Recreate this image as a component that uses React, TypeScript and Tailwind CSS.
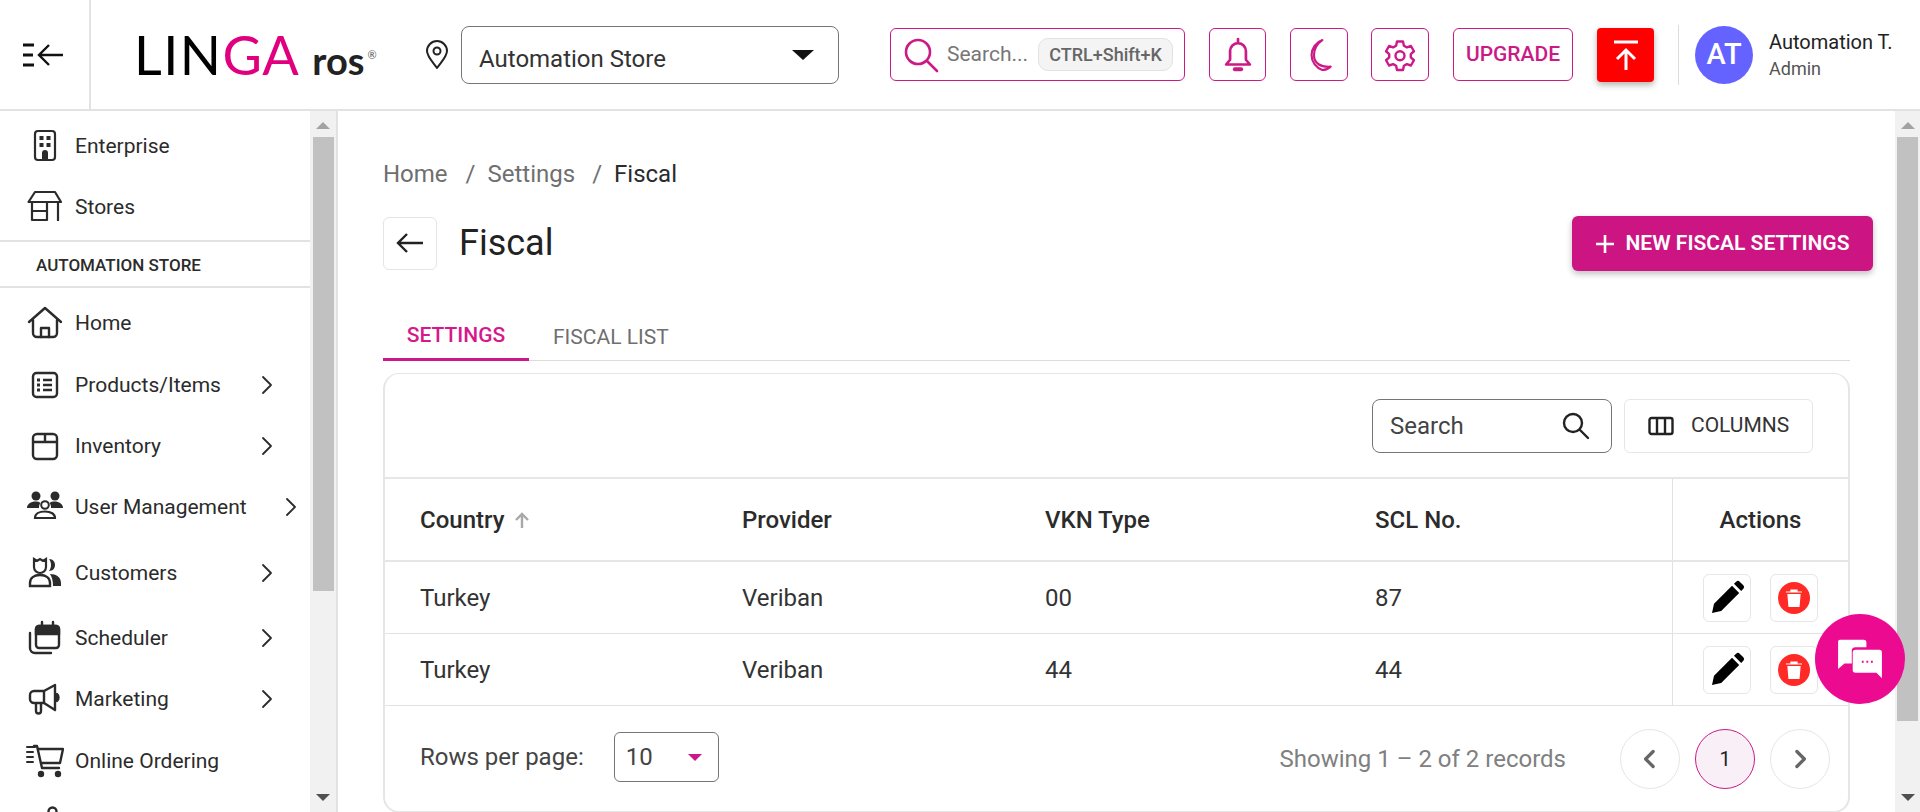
import type { ReactNode } from "react";

const PINK = "#cb1a87";

function Stroke({ size = 24, width = 2, color = "currentColor", children, className }: { size?: number; width?: number; color?: string; children: ReactNode; className?: string }) {
  return (
    <svg width={size} height={size} viewBox="0 0 24 24" fill="none" stroke={color} strokeWidth={width} strokeLinecap="round" strokeLinejoin="round" className={className}>
      {children}
    </svg>
  );
}

const navIcons: Record<string, ReactNode> = {
  enterprise: (
    <svg width="36" height="36" viewBox="0 0 36 36" fill="none" stroke="#2b2b2b" strokeWidth="2.2">
      <rect x="8" y="3" width="20" height="29" rx="3" />
      <path d="M12.5 8h4v4h-4zM19.5 8h4v4h-4zM12.5 15h4v4h-4zM19.5 15h4v4h-4zM15 31v-6a3 3 0 0 1 6 0v6z" fill="#2b2b2b" stroke="none" />
    </svg>
  ),
  stores: (
    <svg width="36" height="36" viewBox="0 0 36 36" fill="none" stroke="#2b2b2b" strokeWidth="2.2" strokeLinejoin="round">
      <path d="M8 3h20l6 10H1.500z" />
      <path d="M5 13v18h15V13M5 22h15M31 13v19" />
    </svg>
  ),
  home: (
    <svg width="36" height="36" viewBox="0 0 36 36" fill="none" stroke="#2b2b2b" strokeWidth="2.4" strokeLinejoin="round" strokeLinecap="round">
      <path d="M2 17 18 3l16 14" />
      <path d="M6 15v13a4 4 0 0 0 4 4h16a4 4 0 0 0 4-4V15" />
      <path d="M14 32v-9h8v9" />
    </svg>
  ),
  products: (
    <svg width="36" height="36" viewBox="0 0 36 36" fill="none" stroke="#2b2b2b" strokeWidth="2.4">
      <rect x="6" y="6" width="24" height="24" rx="3.500" />
      <path d="M16 13h9M16 18h9M16 23h9" />
      <path d="M10 11.500h3v3h-3zM10 16.500h3v3h-3zM10 21.500h3v3h-3z" fill="#2b2b2b" stroke="none" />
    </svg>
  ),
  inventory: (
    <svg width="36" height="36" viewBox="0 0 36 36" fill="none" stroke="#2b2b2b" strokeWidth="2.4" strokeLinejoin="round">
      <path d="M10 6h16a4 4 0 0 1 4 4v17a4 4 0 0 1-4 4H10a4 4 0 0 1-4-4V10a4 4 0 0 1 4-4z" />
      <path d="M6 14h24M18 6v8" />
    </svg>
  ),
  users: (
    <svg width="38" height="36" viewBox="0 0 38 36" fill="#2b2b2b">
      <circle cx="10" cy="7" r="4.500" />
      <circle cx="29" cy="7" r="4.500" />
      <path d="M1 19c0-4 4-6.500 8.500-6.500 2 0 3.500.4 5 1.500-1 1-1.500 2.500-1.500 5zM37 19c0-4-4-6.500-8.500-6.500-2 0-3.500.4-5 1.500 1 1 1.500 2.500 1.500 5z" />
      <circle cx="19" cy="16" r="3.800" fill="none" stroke="#2b2b2b" strokeWidth="2" />
      <path d="M9 29c0-4 4-6.500 10-6.500s10 2.500 10 6.500z" fill="none" stroke="#2b2b2b" strokeWidth="2.200" />
    </svg>
  ),
  customers: (
    <svg width="36" height="36" viewBox="0 0 36 36" fill="#2b2b2b">
      <path d="M7 4l3 2 3-2 3 2 3-2v8a6 6 0 0 1-12 0z" fill="none" stroke="#2b2b2b" strokeWidth="2.200" />
      <path d="M22 4c4 0 6 3 6 6s-2 6-6 6c1.500-2 2-4 2-6s-.5-4-2-6z" />
      <path d="M3 31v-3c0-5 4-8 10-8s10 3 10 8v3z" fill="none" stroke="#2b2b2b" strokeWidth="2.400" />
      <path d="M23 19c6 0 11 3 11 9v3h-8c0-5-1-9-3-12z" />
    </svg>
  ),
  scheduler: (
    <svg width="36" height="36" viewBox="0 0 36 36" fill="none" stroke="#2b2b2b" strokeWidth="2.400" strokeLinecap="round">
      <rect x="9" y="6" width="23" height="22" rx="3" />
      <path d="M9 9a3 3 0 0 1 3-3h17a3 3 0 0 1 3 3v5H9z" fill="#2b2b2b" />
      <path d="M15 2v4M26 2v4" />
      <path d="M3 13v15a5 5 0 0 0 5 5h16" />
    </svg>
  ),
  marketing: (
    <svg width="36" height="36" viewBox="0 0 36 36" fill="none" stroke="#2b2b2b" strokeWidth="2.400" strokeLinejoin="round">
      <path d="M28 4 17 10H7a4 4 0 0 0-4 4v4a4 4 0 0 0 4 4h10l11 7z" />
      <path d="M9 22v8a2.500 2.500 0 0 0 5 0v-8M17 10v12" />
      <path d="M30 13c2 1 2 6 0 7z" fill="#2b2b2b" />
    </svg>
  ),
  online: (
    <svg width="38" height="36" viewBox="0 0 38 36" fill="none" stroke="#2b2b2b" strokeWidth="2.400" strokeLinecap="round" strokeLinejoin="round">
      <path d="M1 4h8M1 9h6M1 14h6M1 19h6" strokeWidth="2" />
      <path d="M8 3h3l5 22h17" />
      <path d="M12 6h25l-3 14H15" />
      <circle cx="15" cy="31" r="2" fill="#2b2b2b" />
      <circle cx="32" cy="31" r="2" fill="#2b2b2b" />
    </svg>
  ),
};

function Chevron() {
  return (
    <Stroke size={24} width={1.800} color="#2b2b2b">
      <path d="m8 4 8 8-8 8" />
    </Stroke>
  );
}

function NavItem({ icon, label, arrow, mt, wide }: { icon: string; label: string; arrow?: boolean; mt: string; wide?: boolean }) {
  return (
    <div className={`flex h-[60px] items-center pl-[26px] ${mt}`}>
      <div className="flex w-[38px] shrink-0 justify-center">{navIcons[icon]}</div>
      <span className="ml-[11px] text-[21px] leading-none text-[#2b2b2b]">{label}</span>
      {arrow && (
        <div className={`ml-auto ${wide ? "mr-[7px]" : "mr-[31px]"} flex`}>
          <Chevron />
        </div>
      )}
    </div>
  );
}

function Scrollbar({ thumb, right }: { thumb: string; right?: boolean }) {
  return (
    <div className={`relative flex shrink-0 flex-col items-center bg-[#f1f1f1] ${right ? "w-[25px]" : "w-[26px]"}`}>
      <div className="mt-[11px] h-0 w-0 border-x-[7px] border-b-[7px] border-x-transparent border-b-[#a3a3a3]" />
      <div className={`mt-[8px] w-[21px] bg-[#c1c1c1] ${thumb}`} />
      <div className="mt-auto mb-[11px] h-0 w-0 border-x-[7px] border-t-[7px] border-x-transparent border-t-[#505050]" />
    </div>
  );
}

function IconBtn({ className, children }: { className: string; children: ReactNode }) {
  return <div className={`flex items-center justify-center rounded-[6px] border border-[#cb1a87] ${className}`}>{children}</div>;
}

function Header() {
  return (
    <header className="flex h-[111px] shrink-0 items-center border-b-2 border-[#e2e2e2] bg-white">
      <div className="flex h-full w-[91px] shrink-0 items-center border-r-2 border-[#e2e2e2] pl-[22px]">
        <svg width="42" height="30" viewBox="0 0 42 30" fill="none" stroke="#111" strokeWidth="2.400">
          <path d="M1 5h11M1 15h10M1 25h11" strokeWidth="3" />
          <path d="M41 15H17M27 5 17 15l10 10" />
        </svg>
      </div>
      <div className="ml-[43px] flex w-[293px] shrink-0 items-baseline font-['Lato',sans-serif] leading-none">
        <span className="text-[54px] font-normal tracking-[1.5px] text-black">LIN</span>
        <span className="text-[54px] font-normal tracking-[0.5px] text-[#e0007f]">GA</span>
        <span className="ml-[13px] text-[38px] font-bold text-[#222]">ros</span>
        <span className="ml-[3px] self-center text-[11px] text-[#555]">®</span>
      </div>
      <svg width="24" height="30" viewBox="0 0 24 30" fill="none" stroke="#222" strokeWidth="2" className="ml-[-2px] shrink-0">
        <path d="M12 28C6 20 2 16 2 11a10 10 0 0 1 20 0c0 5-4 9-10 17z" strokeLinejoin="round" />
        <circle cx="12" cy="11" r="3.500" />
      </svg>
      <div className="ml-[12px] flex h-[58px] w-[378px] shrink-0 items-center rounded-[8px] border border-[#757575] pl-[17px] pr-[24px]">
        <span className="pt-[9px] text-[24px] leading-[28px] text-[#333]">Automation Store</span>
        <div className="ml-auto h-0 w-0 border-x-[11px] border-t-[10px] border-x-transparent border-t-[#111]" />
      </div>
      <div className="ml-[51px] flex h-[53px] w-[295px] shrink-0 items-center rounded-[6px] border border-[#cb1a87] pl-[12px]">
        <svg width="36" height="36" viewBox="0 0 36 36" fill="none" stroke={PINK} strokeWidth="2.600" strokeLinecap="round">
          <circle cx="15" cy="15" r="12" />
          <path d="m24 24 10 10" />
        </svg>
        <span className="ml-[8px] text-[21px] text-[#777]">Search...</span>
        <span className="ml-[10px] flex h-[33px] w-[135px] items-center justify-center rounded-[10px] border border-[#e2e2e2] bg-[#f4f4f4] text-[18px] font-medium text-[#666]">CTRL+Shift+K</span>
      </div>
      <IconBtn className="ml-[24px] h-[53px] w-[57px] shrink-0">
        <Stroke size={38} width={1.700} color={PINK}>
          <path d="M12 2v2M7 15V9.500a5 5 0 0 1 10 0V15l2.500 3h-15z" />
          <path d="M10 21h4" strokeWidth={2.500} />
        </Stroke>
      </IconBtn>
      <IconBtn className="ml-[24px] h-[53px] w-[58px] shrink-0">
        <Stroke size={40} width={1.300} color={PINK}>
          <path d="M14 3a9.500 9.500 0 0 0 0 18c2 0 3.500-.6 5-2-6 .5-10-2-10-7 0-4 2-7 5-9z" />
        </Stroke>
      </IconBtn>
      <IconBtn className="ml-[23px] h-[53px] w-[58px] shrink-0">
        <Stroke size={36} width={1.600} color={PINK}>
          <path d="M10 3h4l.6 2.800 2 1.100 2.700-.9 2 3.500-2.100 1.900v2.200l2.100 1.900-2 3.500-2.700-.9-2 1.100L14 22h-4l-.6-2.800-2-1.100-2.700.9-2-3.500 2.100-1.900v-2.200L2.700 9.500l2-3.500 2.700.9 2-1.100z" />
          <circle cx="12" cy="12.500" r="3" />
        </Stroke>
      </IconBtn>
      <IconBtn className="ml-[24px] h-[53px] w-[120px] shrink-0">
        <span className="text-[21px] font-medium text-[#cb1a87]">UPGRADE</span>
      </IconBtn>
      <div className="ml-[24px] flex h-[54px] w-[57px] shrink-0 items-center justify-center rounded-[4px] bg-[#ff0000] shadow-[0_3px_6px_rgba(0,0,0,0.3)]">
        <svg width="26" height="30" viewBox="0 0 26 30" fill="none" stroke="#fff" strokeWidth="3">
          <path d="M1 2h24M13 30V11M4 19l9-9 9 9" />
        </svg>
      </div>
      <div className="ml-[24px] h-[60px] w-px shrink-0 bg-[#dcdcdc]" />
      <div className="ml-[16px] flex h-[58px] w-[58px] shrink-0 items-center justify-center rounded-full bg-[#6563ff] text-[29px] font-medium text-white">AT</div>
      <div className="ml-[16px] flex flex-col pt-[2px]">
        <span className="text-[20px] leading-[24px] text-[#222]">Automation T.</span>
        <span className="mt-[3px] text-[18px] leading-[24px] text-[#555]">Admin</span>
      </div>
    </header>
  );
}

function Sidebar() {
  return (
    <aside className="flex w-[338px] shrink-0 border-r-2 border-[#e2e2e2] bg-white">
      <nav className="min-w-0 flex-1 overflow-hidden">
        <NavItem icon="enterprise" label="Enterprise" mt="mt-[5px]" />
        <NavItem icon="stores" label="Stores" mt="mt-[1px]" />
        <div className="mt-[3px] flex h-[48px] items-center border-y-2 border-[#e2e2e2] pl-[36px] pt-[3px] text-[17px] font-medium text-[#2b2b2b]">AUTOMATION STORE</div>
        <NavItem icon="home" label="Home" mt="mt-[5px]" />
        <NavItem icon="products" label="Products/Items" arrow mt="mt-[2px]" />
        <NavItem icon="inventory" label="Inventory" arrow mt="mt-[1px]" />
        <NavItem icon="users" label="User Management" arrow wide mt="mt-[1px]" />
        <NavItem icon="customers" label="Customers" arrow mt="mt-[6px]" />
        <NavItem icon="scheduler" label="Scheduler" arrow mt="mt-[5px]" />
        <NavItem icon="marketing" label="Marketing" arrow mt="mt-[1px]" />
        <NavItem icon="online" label="Online Ordering" mt="mt-[2px]" />
        {/* next item, only the top of its icon is in view */}
        <div className="mt-[15px] flex pl-[47px]">
          <svg width="11" height="11" viewBox="0 0 11 11" fill="none" stroke="#2b2b2b" strokeWidth="2.400">
            <circle cx="5.500" cy="5.500" r="4" />
          </svg>
        </div>
      </nav>
      <Scrollbar thumb="h-[454px]" />
    </aside>
  );
}

function ActionCell() {
  return (
    <div className="flex h-full w-[176px] shrink-0 items-center gap-[19px] border-l border-[#e2e2e2] pl-[30px]">
      <div className="flex h-[48px] w-[48px] items-center justify-center rounded-[6px] border border-[#e6e6e6]">
        <svg width="40" height="40" viewBox="0 0 24 24" fill="#000">
          <path d="M3 21l1.200-5.500L15 4.700l4.300 4.300L8.500 19.800zM16.200 3.500l1.300-1.300a1.500 1.500 0 0 1 2.100 0l2.200 2.200a1.500 1.500 0 0 1 0 2.100l-1.300 1.300z" />
        </svg>
      </div>
      <div className="flex h-[48px] w-[48px] items-center justify-center rounded-[6px] border border-[#e6e6e6]">
        <svg width="32" height="32" viewBox="0 0 32 32">
          <circle cx="16" cy="16" r="16" fill="#ff2a26" />
          <path d="M8 10h16M13 10V8h6v2M10 12.500h12l-1 12h-10z" fill="#fff" stroke="#fff" strokeWidth="1.200" />
        </svg>
      </div>
    </div>
  );
}

function Row({ a, b, c, d, h }: { a: string; b: string; c: string; d: string; h: string }) {
  return (
    <div className={`flex items-center border-b border-[#e2e2e2] text-[24px] text-[#333] ${h}`}>
      <span className="w-[357px] pl-[35px]">{a}</span>
      <span className="w-[303px]">{b}</span>
      <span className="w-[330px]">{c}</span>
      <span className="flex-1">{d}</span>
      <ActionCell />
    </div>
  );
}

function Card() {
  return (
    <div className="mt-[12px] w-[1467px] rounded-[16px] border-2 border-t border-[#e6e6e6]">
      <div className="flex h-[105px] items-center justify-end border-b-2 border-[#e6e6e6] pr-[35px]">
        <div className="flex h-[54px] w-[240px] items-center justify-between rounded-[8px] border border-[#757575] pl-[17px] pr-[21px] text-[24px] text-[#444]">
          Search
          <svg width="28" height="28" viewBox="0 0 28 28" fill="none" stroke="#222" strokeWidth="2.400" strokeLinecap="round">
            <circle cx="11" cy="11" r="9" />
            <path d="m18 18 8 8" />
          </svg>
        </div>
        <div className="ml-[12px] flex h-[54px] w-[189px] items-center rounded-[6px] border border-[#e6e6e6] pl-[23px] text-[21px] font-normal text-[#333]">
          <svg width="26" height="20" viewBox="0 0 26 20" fill="none" stroke="#222" strokeWidth="2.400" strokeLinejoin="round">
            <rect x="1.500" y="2" width="23" height="16" rx="2" />
            <path d="M9 2v16M17 2v16" />
          </svg>
          <span className="ml-[17px]">COLUMNS</span>
        </div>
      </div>
      <div className="flex h-[83px] items-center border-b-2 border-[#e6e6e6] text-[24px] font-medium text-[#2b2b2b]">
        <span className="flex w-[357px] items-center pl-[35px]">
          Country
          <svg width="18" height="18" viewBox="0 0 18 18" fill="none" stroke="#a8a8a8" strokeWidth="2.400" className="ml-[9px]">
            <path d="M9 17V3M3 9l6-6 6 6" />
          </svg>
        </span>
        <span className="w-[303px]">Provider</span>
        <span className="w-[330px]">VKN Type</span>
        <span className="flex-1">SCL No.</span>
        <div className="flex h-full w-[176px] shrink-0 items-center justify-center border-l border-[#e2e2e2]">Actions</div>
      </div>
      <Row a="Turkey" b="Veriban" c="00" d="87" h="h-[72px]" />
      <Row a="Turkey" b="Veriban" c="44" d="44" h="h-[72px]" />
      <div className="flex h-[105px] items-center pl-[35px] pr-[18px]">
        <div className="mb-[3px] flex items-center">
          <span className="text-[24px] text-[#444]">Rows per page:</span>
          <div className="ml-[30px] flex h-[50px] w-[105px] items-center justify-between rounded-[6px] border border-[#757575] pl-[11px] pr-[16px] text-[24px] text-[#444]">
            10
            <div className="h-0 w-0 border-x-[7px] border-t-[7px] border-x-transparent border-t-[#cb1a87]" />
          </div>
        </div>
        <span className="ml-auto text-[24px] text-[#808080]">Showing 1 – 2 of 2 records</span>
        <div className="ml-[54px] flex h-[60px] w-[60px] items-center justify-center rounded-full border border-[#e6e6e6]">
          <Stroke size={30} width={2.600} color="#666"><path d="m14.500 6-6 6 6 6" /></Stroke>
        </div>
        <div className="ml-[15px] flex h-[60px] w-[60px] items-center justify-center rounded-full border border-[#cb1a87] bg-[#f9f0f7] text-[20px] text-[#222]">1</div>
        <div className="ml-[15px] flex h-[60px] w-[60px] items-center justify-center rounded-full border border-[#e6e6e6]">
          <Stroke size={30} width={2.600} color="#666"><path d="m9.500 6 6 6-6 6" /></Stroke>
        </div>
      </div>
    </div>
  );
}

function Main() {
  return (
    <main className="flex min-w-0 flex-1 bg-white">
      <div className="min-w-0 flex-1 overflow-hidden pl-[45px] pt-[45px]">
        <div className="flex items-center text-[24px] leading-[36px] text-[#6f6f6f]">
          <span>Home</span>
          <span className="ml-[18px]">/</span>
          <span className="ml-[12px]">Settings</span>
          <span className="ml-[17px]">/</span>
          <span className="ml-[12px] text-[#2b2b2b]">Fiscal</span>
        </div>
        <div className="mt-[23px] flex items-center">
          <div className="flex h-[53px] w-[54px] items-center justify-center rounded-[6px] border border-[#e4e4e4]">
            <svg width="28" height="20" viewBox="0 0 28 20" fill="none" stroke="#222" strokeWidth="2.400">
              <path d="M27 10H2M11 1 2 10l9 9" />
            </svg>
          </div>
          <h1 className="ml-[22px] text-[36px] font-normal leading-none text-[#222]">Fiscal</h1>
          <div className="ml-auto mr-[22px] mt-[1px] flex h-[55px] w-[301px] items-center justify-center gap-[12px] rounded-[6px] bg-[#cd1483] text-[21px] font-semibold text-white shadow-[0_3px_6px_rgba(0,0,0,0.25)]">
            <svg width="18" height="18" viewBox="0 0 18 18" fill="none" stroke="#fff" strokeWidth="2.600"><path d="M9 0v18M0 9h18" /></svg>
            NEW FISCAL SETTINGS
          </div>
        </div>
        <div className="mt-[49px] flex h-[41px] w-[1467px] border-b border-[#dcdcdc] text-[21px]">
          <div className="flex h-[41px] w-[146px] items-center justify-center border-b-[3px] border-[#cb1a87] pb-[6px] font-medium text-[#d6188c]">SETTINGS</div>
          <div className="ml-[24px] flex h-[41px] items-center pb-[5px] font-normal text-[#6f6f6f]">FISCAL LIST</div>
        </div>
        <Card />
      </div>
      <Scrollbar thumb="h-[584px]" right />
    </main>
  );
}

export default function App() {
  return (
    <div className="relative flex h-[812px] w-[1920px] flex-col overflow-hidden bg-white font-['Roboto',sans-serif]">
      <Header />
      <div className="flex min-h-0 flex-1">
        <Sidebar />
        <Main />
      </div>
      {/* chat launcher floats above the page */}
      <div className="absolute left-[1815px] top-[614px] flex h-[90px] w-[90px] items-center justify-center rounded-full bg-[#ec0a91]">
        <svg width="46" height="42" viewBox="0 0 50 46">
          <path d="M3 2h26a3 3 0 0 1 3 3v5H20a4 4 0 0 0-4 4v14H8l-7 6V4a2 2 0 0 1 2-2z" fill="#fff" />
          <path d="M20 13h26a3 3 0 0 1 3 3v28l-6-6H20a3 3 0 0 1-3-3V16a3 3 0 0 1 3-3z" fill="#fff" />
          <path d="M27 25h2v2h-2zM32 25h2v2h-2zM37 25h2v2h-2z" fill="#ec0a91" />
        </svg>
      </div>
    </div>
  );
}
